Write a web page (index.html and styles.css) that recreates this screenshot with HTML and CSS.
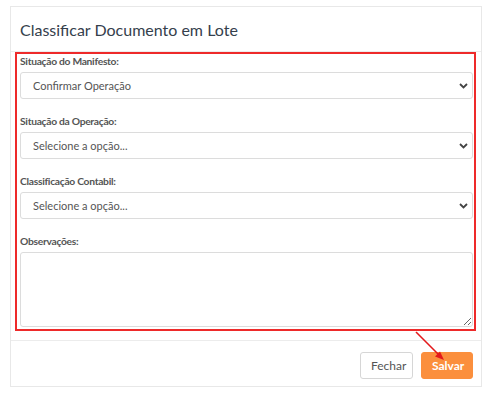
FILE: index.html
```html
<!DOCTYPE html>
<html lang="pt-BR">
<head>
    <meta charset="UTF-8">
    <meta name="viewport" content="width=device-width, initial-scale=1.0">
    <title>Classificar Documento em Lote</title>
    <link rel="stylesheet" href="styles.css">
</head>
<body>
    <div class="modal">
        <div class="modal-header">
            <h4 class="modal-title">Classificar Documento em Lote</h4>
        </div>

        <div class="modal-body">
            <div class="highlight">
                <div class="field">
                    <label for="manifesto">Situação do Manifesto:</label>
                    <div class="select-wrap">
                        <select id="manifesto" class="form-control">
                            <option>Confirmar Operação</option>
                        </select>
                        <svg class="chevron" width="9" height="6" viewBox="0 0 9 6"><path d="M1 1l3.5 3.5L8 1" fill="none" stroke="#444" stroke-width="1.8"/></svg>
                    </div>
                </div>
                <div class="field">
                    <label for="operacao">Situação da Operação:</label>
                    <div class="select-wrap">
                        <select id="operacao" class="form-control">
                            <option>Selecione a opção...</option>
                        </select>
                        <svg class="chevron" width="9" height="6" viewBox="0 0 9 6"><path d="M1 1l3.5 3.5L8 1" fill="none" stroke="#444" stroke-width="1.8"/></svg>
                    </div>
                </div>
                <div class="field">
                    <label for="contabil">Classificação Contabil:</label>
                    <div class="select-wrap">
                        <select id="contabil" class="form-control">
                            <option>Selecione a opção...</option>
                        </select>
                        <svg class="chevron" width="9" height="6" viewBox="0 0 9 6"><path d="M1 1l3.5 3.5L8 1" fill="none" stroke="#444" stroke-width="1.8"/></svg>
                    </div>
                </div>
                <div class="field last">
                    <label for="obs">Observações:</label>
                    <textarea id="obs" class="form-control"></textarea>
                </div>
            </div>
        </div>

        <div class="modal-footer">
            <button class="btn btn-default">Fechar</button>
            <button class="btn btn-warning">Salvar</button>
        </div>

        <!-- annotation arrow -->
        <svg class="pointer" width="40" height="40" viewBox="0 0 40 40">
            <line x1="2" y1="1" x2="25" y2="24" stroke="#e3191c" stroke-width="1.6"/>
            <path d="M30 29l-9-3.5 5-5z" fill="#e3191c"/>
        </svg>
    </div>
</body>
</html>
```

FILE: styles.css
```css
body {
    margin: 0;
    padding: 6px 6px 0 10px;
    background: #fff;
    font-family: Lato, "Open Sans", sans-serif;
    color: #555;
}
.modal {
    position: relative;
    width: 470px;
    border: 1px solid #e8e8e8;
    background: #fff;
}
.modal-header {
    height: 44px;
    padding: 0 9px;
    display: flex;
    align-items: center;
    border-bottom: 1px solid #ececec;
}
.modal-title {
    margin: 0;
    font-size: 16px;
    font-weight: 400;
    color: #35404c;
}
.modal-body {
    padding: 0 5px 9px 4px;
    border-bottom: 1px solid #ececec;
}
.highlight {
    border: 2px solid #ee2a2a;
    padding: 0 1px 2px 3px;
}
.field {
    margin-bottom: 15px;
}
.field.last {
    margin-bottom: 0;
}
.field label {
    display: block;
    height: 14px;
    line-height: 14px;
    margin-bottom: 4px;
    font-size: 10.3px;
    font-weight: 700;
    letter-spacing: -0.3px;
    color: #555;
}
.select-wrap {
    position: relative;
}
.form-control {
    display: block;
    width: 100%;
    box-sizing: border-box;
    border: 1px solid #dcdcdc;
    border-radius: 3px;
    background: #fff;
    font-family: Lato, "Open Sans", sans-serif;
    font-size: 11px;
    color: #555;
    outline: none;
}
select.form-control {
    height: 27px;
    padding: 0 24px 0 12px;
    appearance: none;
    -webkit-appearance: none;
}
textarea.form-control {
    height: 75px;
    padding: 6px 12px;
    resize: vertical;
}
.chevron {
    position: absolute;
    right: 5px;
    top: 11px;
    pointer-events: none;
}
.modal-footer {
    height: 45px;
    padding: 0 8px 0 0;
    display: flex;
    justify-content: flex-end;
    align-items: flex-start;
    gap: 8px;
}
.btn {
    margin-top: 11px;
    height: 27px;
    padding: 0 10px;
    border-radius: 3px;
    font-family: Lato, "Open Sans", sans-serif;
    font-size: 12px;
    cursor: pointer;
}
.btn-default {
    width: 53px;
    background: #fff;
    border: 1px solid #d6d6d6;
    color: #555;
}
.btn-warning {
    width: 52px;
    background: #fb8f3d;
    border: 1px solid #fb8f3d;
    color: #fff;
    font-weight: 700;
}
.pointer {
    position: absolute;
    left: 403px;
    top: 324px;
}
```
